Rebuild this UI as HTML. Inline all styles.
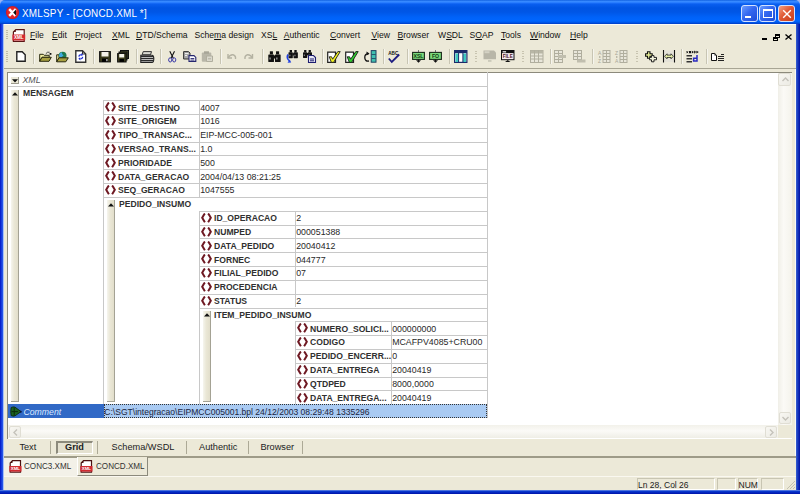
<!DOCTYPE html><html><head><meta charset="utf-8"><style>
*{margin:0;padding:0;box-sizing:border-box}
html,body{width:800px;height:494px;overflow:hidden}
body{position:relative;background:#ECE9D8;font-family:'Liberation Sans', sans-serif;color:#000}
.a{position:absolute}
.t{position:absolute;white-space:nowrap;line-height:1}
.sep{position:absolute;top:48.5px;width:2px;height:15.5px;border-left:1px solid #C8C5B3;border-right:1px solid #F6F5EE}
.hl{position:absolute;height:1px;background:#C8C8C8}
.vl{position:absolute;width:1px;background:#C8C8C8}
.nm{position:absolute;white-space:nowrap;font-weight:bold;font-size:9.2px;color:#303030;line-height:1;transform:scaleX(0.935);transform-origin:0 0}
.vv{position:absolute;white-space:nowrap;font-size:8.8px;color:#282828;line-height:1}
.ic{position:absolute;width:10px;height:9px}
.bar{position:absolute;background:linear-gradient(90deg,#F6F5EE,#EAE7D6 45%,#E2DECB);border-right:1px solid #A4A294;border-bottom:1px solid #A4A294}
</style></head><body>

<div class="a" style="left:0;top:0;width:6px;height:6px;background:#9AB4F2"></div><div class="a" style="left:794px;top:0;width:6px;height:6px;background:#9AB4F2"></div>
<div class="a" style="left:0;top:0;width:800px;height:25px;border-radius:5px 5px 0 0;background:linear-gradient(#0050D8 0px,#3D8FFF 1px,#2A7EFF 2.5px,#0A5FF0 4px,#0054E3 8px,#0056E6 12px,#0062F8 17px,#0066FF 21px,#0050E0 23px,#0038C0 24px)"></div>
<svg class="a" style="left:4.5px;top:5px" width="15" height="15" viewBox="0 0 15 15"><circle cx="7.5" cy="7.5" r="6.6" fill="#D01C24"/><circle cx="7.5" cy="7.5" r="5.6" fill="#E0282C"/><path d="M4.2 4.2 L10.5 10.8 M10.8 4.2 L4.2 10.8" stroke="#fff" stroke-width="2.4"/><path d="M8.2 7.5 L11 4.6 L11 10.4 Z" fill="#111"/></svg>
<div class="t" style="left:22px;top:8.4px;font-size:11px;color:#fff;letter-spacing:0.25px;transform:scaleX(0.9);transform-origin:0 0">XMLSPY - [CONCD.XML *]</div>
<div class="a" style="left:741px;top:5px;width:17px;height:17px;border:1px solid #D4E2FF;border-radius:3px;background:linear-gradient(135deg,#6A9CFF,#3468F0 45%,#1E4CD8)"><div class="a" style="left:3.2px;top:9.6px;width:5.5px;height:2.4px;background:#fff"></div></div>
<div class="a" style="left:759.3px;top:5px;width:17px;height:17px;border:1px solid #D4E2FF;border-radius:3px;background:linear-gradient(135deg,#6A9CFF,#3468F0 45%,#1E4CD8)"><div class="a" style="left:2.6px;top:3.4px;width:9.8px;height:8.6px;border:1.2px solid #fff;border-top-width:2.4px"></div></div>
<div class="a" style="left:778.2px;top:5px;width:17px;height:17px;border:1px solid #D4E2FF;border-radius:3px;background:linear-gradient(135deg,#F4A080,#E05A36 45%,#C83E1C)"><svg class="a" style="left:2.8px;top:2.8px" width="10" height="10" viewBox="0 0 10 10"><path d="M1.2 1.2L8.8 8.8M8.8 1.2L1.2 8.8" stroke="#fff" stroke-width="1.4"/></svg></div>
<div class="a" style="left:3px;top:24px;width:793px;height:1px;background:#FBFAF5"></div>
<div class="a" style="left:0;top:24px;width:3px;height:470px;background:linear-gradient(90deg,#0014C4,#1A44E0 60%,#2C5CEC)"></div>
<div class="a" style="left:3px;top:24px;width:1px;height:466px;background:#A8C0F4"></div>
<div class="a" style="left:796px;top:24px;width:4px;height:470px;background:linear-gradient(90deg,#3A62D0,#1A3CC0 40%,#0010A4)"></div>
<div class="a" style="left:0;top:490px;width:800px;height:4px;background:linear-gradient(#7C9CE8,#0A3CD0 30%,#0428C0 60%,#0014A8)"></div>
<div class="a" style="left:6px;top:30px;width:2px;height:10px;background:repeating-linear-gradient(#C0BCA8 0 1px,transparent 1px 2px)"></div>
<svg class="a" style="left:11.5px;top:28.5px" width="14" height="13" viewBox="0 0 14 13"><path d="M3.8 0.6H12.2V12.3H1.4V3Z" fill="#fff" stroke="#5A1414" stroke-width="1.2"/><path d="M1.4 3H3.8V0.6Z" fill="#5A1414"/><path d="M0.4 5.4H13.2V10.6Q13.2 11.6 12.2 11.6H0.4Z" fill="#D42A30"/><text x="6.8" y="9.8" font-size="4.6" font-family="Liberation Sans" font-weight="bold" fill="#fff" text-anchor="middle">XML</text></svg>
<div class="t" style="left:30px;top:30.5px;font-size:8.6px;color:#111"><u style="text-underline-offset:0.8px">F</u>ile</div>
<div class="t" style="left:52px;top:30.5px;font-size:8.6px;color:#111"><u style="text-underline-offset:0.8px">E</u>dit</div>
<div class="t" style="left:75px;top:30.5px;font-size:8.6px;color:#111"><u style="text-underline-offset:0.8px">P</u>roject</div>
<div class="t" style="left:112px;top:30.5px;font-size:8.6px;color:#111"><u style="text-underline-offset:0.8px">X</u>ML</div>
<div class="t" style="left:136px;top:30.5px;font-size:8.6px;color:#111"><u style="text-underline-offset:0.8px">D</u>TD/Schema</div>
<div class="t" style="left:194.5px;top:30.5px;font-size:8.6px;color:#111">Sche<u style="text-underline-offset:0.8px">m</u>a design</div>
<div class="t" style="left:261px;top:30.5px;font-size:8.6px;color:#111">XS<u style="text-underline-offset:0.8px">L</u></div>
<div class="t" style="left:283.75px;top:30.5px;font-size:8.6px;color:#111"><u style="text-underline-offset:0.8px">A</u>uthentic</div>
<div class="t" style="left:330px;top:30.5px;font-size:8.6px;color:#111"><u style="text-underline-offset:0.8px">C</u>onvert</div>
<div class="t" style="left:371.4px;top:30.5px;font-size:8.6px;color:#111"><u style="text-underline-offset:0.8px">V</u>iew</div>
<div class="t" style="left:397.5px;top:30.5px;font-size:8.6px;color:#111"><u style="text-underline-offset:0.8px">B</u>rowser</div>
<div class="t" style="left:438px;top:30.5px;font-size:8.6px;color:#111">W<u style="text-underline-offset:0.8px">S</u>DL</div>
<div class="t" style="left:469.6px;top:30.5px;font-size:8.6px;color:#111">S<u style="text-underline-offset:0.8px">O</u>AP</div>
<div class="t" style="left:501px;top:30.5px;font-size:8.6px;color:#111"><u style="text-underline-offset:0.8px">T</u>ools</div>
<div class="t" style="left:530px;top:30.5px;font-size:8.6px;color:#111"><u style="text-underline-offset:0.8px">W</u>indow</div>
<div class="t" style="left:570px;top:30.5px;font-size:8.6px;color:#111"><u style="text-underline-offset:0.8px">H</u>elp</div>
<div class="a" style="left:762px;top:38px;width:5px;height:2px;background:#000"></div>
<div class="a" style="left:775px;top:34px;width:5px;height:4px;border:1px solid #000;border-top-width:2px"></div><div class="a" style="left:773px;top:36.5px;width:5px;height:4.5px;border:1px solid #000;border-top-width:2px;background:#ECE9D8"></div>
<svg class="a" style="left:785px;top:34px" width="7" height="6" viewBox="0 0 7 6"><path d="M0.5 0.5L6.5 5.5M6.5 0.5L0.5 5.5" stroke="#000" stroke-width="1.3"/></svg>
<div class="a" style="left:6px;top:51px;width:2px;height:12px;background:repeating-linear-gradient(#C0BCA8 0 1px,transparent 1px 2px)"></div>
<div class="sep" style="left:33.2px"></div>
<div class="sep" style="left:93.2px"></div>
<div class="sep" style="left:135.7px"></div>
<div class="sep" style="left:160.0px"></div>
<div class="sep" style="left:219.7px"></div>
<div class="sep" style="left:261.7px"></div>
<div class="sep" style="left:322.2px"></div>
<div class="sep" style="left:382.7px"></div>
<div class="sep" style="left:406.8px"></div>
<div class="sep" style="left:449.2px"></div>
<div class="sep" style="left:549.7px"></div>
<div class="sep" style="left:591.7px"></div>
<div class="sep" style="left:681.0px"></div>
<div class="sep" style="left:705.7px"></div>
<div class="a" style="left:475.2px;top:51px;width:2px;height:12px;background:repeating-linear-gradient(#C8C4B0 0 1px,transparent 1px 2.4px)"></div>
<div class="a" style="left:522px;top:51px;width:2px;height:12px;background:repeating-linear-gradient(#C8C4B0 0 1px,transparent 1px 2.4px)"></div>
<div class="a" style="left:636.2px;top:51px;width:2px;height:12px;background:repeating-linear-gradient(#C8C4B0 0 1px,transparent 1px 2.4px)"></div>
<svg class="a" style="left:15.8px;top:51px;overflow:visible" width="10" height="11" viewBox="0 0 10 11"><path d="M0.8 0.8H6.2L9.2 3.8V10.2H0.8Z" fill="#fff" stroke="#222" stroke-width="1.4"/></svg>
<svg class="a" style="left:38.8px;top:51px;overflow:visible" width="13" height="11" viewBox="0 0 13 11"><path d="M0.7 3.3H4.2L5.2 4.3H10.2V6.3H3L0.7 10.3Z" fill="#F2EEA0" stroke="#2A2A10" stroke-width="1"/><path d="M0.7 10.3L3 6.3H12.3L10 10.3Z" fill="#A8A040" stroke="#2A2A10" stroke-width="1"/><path d="M6.8 2.8Q8 0.6 10.6 1.2" fill="none" stroke="#333" stroke-width="0.9"/><rect x="10.6" y="2" width="1.8" height="1.8" fill="#111"/></svg>
<svg class="a" style="left:56px;top:50.5px;overflow:visible" width="12.5" height="11.5" viewBox="0 0 12.5 11.5"><path d="M0.7 3.8H3V6.8L0.7 10.8Z" fill="#F2EEA0" stroke="#2A2A10" stroke-width="1"/><circle cx="6.6" cy="4.6" r="3.9" fill="#1E7A50"/><path d="M3 4.2Q3.5 1.5 6 1.2Q5.5 3 7.5 4.5Q6 6.5 3.5 6.5Z" fill="#40A8E0"/><path d="M0.7 10.8L3 6.8H12.3L9.8 10.8Z" fill="#A8A040" stroke="#2A2A10" stroke-width="1"/></svg>
<svg class="a" style="left:74.8px;top:50px;overflow:visible" width="11.5" height="13" viewBox="0 0 11.5 13"><path d="M0.8 0.8H7.5L10.7 4V12.2H0.8Z" fill="#fff" stroke="#333" stroke-width="1.4"/><path d="M7.5 0.8V4H10.7" fill="none" stroke="#333"/><path d="M3.2 6.5Q3.5 3.8 6.5 4.3L6 3L8.2 4.8L6.3 6.3L6.4 5.2Q4.8 5 4.4 6.8Z" fill="#2030D0"/><path d="M8.3 7Q8 9.8 5 9.3L5.5 10.6L3.3 8.8L5.2 7.3L5.1 8.4Q6.7 8.6 7.1 6.8Z" fill="#2030D0"/></svg>
<svg class="a" style="left:99px;top:51px;overflow:visible" width="12" height="11.5" viewBox="0 0 12 11.5"><rect x="0.6" y="0.6" width="10.8" height="10.3" fill="#3A3A1A" stroke="#111" stroke-width="1"/><rect x="2.5" y="1" width="7" height="4.5" fill="#F4F2E8"/><rect x="3" y="7.5" width="6" height="3.4" fill="#000"/><rect x="7.3" y="8" width="1.2" height="2.2" fill="#ddd"/></svg>
<svg class="a" style="left:117.2px;top:50px;overflow:visible" width="12" height="12.5" viewBox="0 0 12 12.5"><rect x="3.5" y="0.5" width="8" height="8" fill="#4A4A2A" stroke="#111"/><rect x="2" y="2" width="8" height="8" fill="#3A3A1A" stroke="#111"/><rect x="0.6" y="3.6" width="8.5" height="8.4" fill="#3A3A1A" stroke="#111"/><rect x="2.2" y="4" width="5" height="3.5" fill="#F4F2E8"/><rect x="2.5" y="9" width="4.5" height="2.8" fill="#000"/></svg>
<svg class="a" style="left:140px;top:50.5px;overflow:visible" width="14.5" height="12" viewBox="0 0 14.5 12"><path d="M3.2 0.6H11.5L10.5 3.8H2.2Z" fill="#D8D8D0" stroke="#333" stroke-width="1"/><path d="M0.8 4.2H12Q13.8 4.2 13.8 7.5Q13.8 11.4 12 11.4H0.8Z" fill="#EEE" stroke="#222" stroke-width="1.1"/><path d="M0.8 5.6H13.5M0.8 7.6H13.8M0.8 9.6H13.6" stroke="#2A2A2A" stroke-width="1.1"/></svg>
<svg class="a" style="left:168px;top:51px;overflow:visible" width="8.5" height="11.5" viewBox="0 0 8.5 11.5"><path d="M1.8 0.3L5.3 7.2M6.5 0.3L3 7.2" stroke="#111" stroke-width="1.1"/><ellipse cx="2.2" cy="8.9" rx="1.6" ry="2.1" fill="none" stroke="#3A3AA8" stroke-width="1"/><ellipse cx="6.2" cy="8.9" rx="1.6" ry="2.1" fill="none" stroke="#3A3AA8" stroke-width="1"/></svg>
<svg class="a" style="left:183px;top:51px;overflow:visible" width="13.5" height="11" viewBox="0 0 13.5 11"><path d="M0.6 0.6H5.5L7 2V8H0.6Z" fill="#A8A8A8" stroke="#333" stroke-width="1"/><path d="M2 2.5H5.5M2 4.5H4" stroke="#EEE"/><path d="M6 4.6H11L12.8 6.4V10.4H6Z" fill="#fff" stroke="#26266E" stroke-width="1.1"/><path d="M7.5 7.5H11.3M7.5 9H11.3" stroke="#26266E" stroke-width="0.9"/></svg>
<svg class="a" style="left:201.25px;top:50.75px;overflow:visible" width="12.5" height="11" viewBox="0 0 12.5 11"><rect x="0.8" y="1.5" width="9.5" height="9.3" rx="1" fill="#B8B6A8"/><rect x="3" y="0.3" width="5" height="2.5" fill="#A8A698"/><path d="M5.5 5H11.5V10.5H5.5Z" fill="#DAD8CC" stroke="#B0AE9E"/><path d="M7 7.8H10" stroke="#B0AE9E"/></svg>
<svg class="a" style="left:226px;top:53px;overflow:visible" width="10.5" height="7" viewBox="0 0 10.5 7"><path d="M2 1V5H6" fill="none" stroke="#B4B2A2" stroke-width="1.4"/><path d="M2 5Q4 1.5 7 1.8Q10 2.5 9.5 6" fill="none" stroke="#B4B2A2" stroke-width="1.4"/></svg>
<svg class="a" style="left:244.4px;top:53px;overflow:visible" width="10.5" height="7" viewBox="0 0 10.5 7"><path d="M8.5 1V5H4.5" fill="none" stroke="#B4B2A2" stroke-width="1.4"/><path d="M8.5 5Q6.5 1.5 3.5 1.8Q0.5 2.5 1 6" fill="none" stroke="#B4B2A2" stroke-width="1.4"/></svg>
<svg class="a" style="left:267.6px;top:50.75px;overflow:visible" width="13" height="11" viewBox="0 0 13 11"><g transform="translate(0.3,0.3) scale(1.03)"><rect x="1.5" y="0" width="3" height="3" fill="#111"/><rect x="7.5" y="0" width="3" height="3" fill="#111"/><rect x="0" y="3" width="5.5" height="7.5" rx="0.6" fill="#111"/><rect x="6.5" y="3" width="5.5" height="7.5" rx="0.6" fill="#111"/><rect x="5" y="4" width="2" height="3" fill="#111"/><rect x="1" y="6" width="1.5" height="2" fill="#888"/><rect x="7.5" y="6" width="1.5" height="2" fill="#888"/></g></svg>
<svg class="a" style="left:285.75px;top:50.4px;overflow:visible" width="12" height="13" viewBox="0 0 12 13"><g transform="translate(2.5,0) scale(0.78)"><rect x="1.5" y="0" width="3" height="3" fill="#111"/><rect x="7.5" y="0" width="3" height="3" fill="#111"/><rect x="0" y="3" width="5.5" height="7.5" rx="0.6" fill="#111"/><rect x="6.5" y="3" width="5.5" height="7.5" rx="0.6" fill="#111"/><rect x="5" y="4" width="2" height="3" fill="#111"/><rect x="1" y="6" width="1.5" height="2" fill="#888"/><rect x="7.5" y="6" width="1.5" height="2" fill="#888"/></g><path d="M2 4.5Q0 8 3.5 11" fill="none" stroke="#2040E0" stroke-width="1.6"/><path d="M1.5 12.8L5.2 12.6L3.8 9.5Z" fill="#2040E0"/></svg>
<svg class="a" style="left:303px;top:50.4px;overflow:visible" width="13" height="13" viewBox="0 0 13 13"><g transform="translate(0,0) scale(0.75)"><rect x="1.5" y="0" width="3" height="3" fill="#111"/><rect x="7.5" y="0" width="3" height="3" fill="#111"/><rect x="0" y="3" width="5.5" height="7.5" rx="0.6" fill="#111"/><rect x="6.5" y="3" width="5.5" height="7.5" rx="0.6" fill="#111"/><rect x="5" y="4" width="2" height="3" fill="#111"/><rect x="1" y="6" width="1.5" height="2" fill="#888"/><rect x="7.5" y="6" width="1.5" height="2" fill="#888"/></g><path d="M5.5 5.5H10.5L12.5 7.5V12.5H5.5Z" fill="#E8E8F4" stroke="#1E1E70" stroke-width="1.1"/><path d="M7 9H11M7 10.8H11" stroke="#1E1E70"/></svg>
<svg class="a" style="left:326.75px;top:51px;overflow:visible" width="13.5" height="12" viewBox="0 0 13.5 12"><path d="M0.7 1.2H8.5V11.3H0.7Z" fill="#fff" stroke="#222" stroke-width="1.2"/><path d="M2.2 5.8H4.6L5.6 8.2L10.8 0.6H13.2L6.6 11.4H4.4Z" fill="#F0F020" stroke="#1A1A1A" stroke-width="0.9" stroke-linejoin="round"/></svg>
<svg class="a" style="left:345px;top:51px;overflow:visible" width="13.5" height="12" viewBox="0 0 13.5 12"><path d="M0.7 1.2H8.5V11.3H0.7Z" fill="#fff" stroke="#222" stroke-width="1.2"/><path d="M2.2 5.8H4.6L5.6 8.2L10.8 0.6H13.2L6.6 11.4H4.4Z" fill="#30D030" stroke="#1A1A1A" stroke-width="0.9" stroke-linejoin="round"/></svg>
<svg class="a" style="left:363.6px;top:50.4px;overflow:visible" width="12.5" height="12.5" viewBox="0 0 12.5 12.5"><path d="M4.5 4Q0.5 3.5 0.8 8Q1.2 11.8 5 11" fill="none" stroke="#111" stroke-width="1.3"/><path d="M2.5 1.5L5.5 3.5L2.5 5.5Z" fill="#111"/><rect x="7.2" y="0.6" width="4.8" height="11.6" fill="#40C0B0" stroke="#1E4060" stroke-width="1"/><path d="M7.5 4.5H11.8M7.5 8.5H11.8" stroke="#1E4060" stroke-width="0.8"/></svg>
<svg class="a" style="left:388px;top:50.5px;overflow:visible" width="12" height="12" viewBox="0 0 12 12"><text x="0.3" y="4.2" font-size="4.6" font-family="Liberation Sans" font-weight="bold" fill="#111">ABC</text><path d="M0.8 7.5L3.8 11L11.2 3.5" fill="none" stroke="#1C1C80" stroke-width="1.8"/></svg>
<svg class="a" style="left:411.75px;top:50px;overflow:visible" width="13" height="13" viewBox="0 0 13 13"><path d="M6.5 0V2.5" stroke="#777"/><rect x="0.6" y="2.4" width="11.8" height="7" fill="#7CDA7C" stroke="#1A2A1A" stroke-width="1.1"/><text x="6.5" y="8.2" font-size="5.2" font-family="Liberation Sans" font-weight="bold" fill="#0E3A0E" text-anchor="middle">XSL</text><path d="M6.5 9.5V11" stroke="#111"/><path d="M4 10.3H9L6.5 12.8Z" fill="#111"/></svg>
<svg class="a" style="left:429.25px;top:50px;overflow:visible" width="13" height="13" viewBox="0 0 13 13"><path d="M6.5 0V2.5" stroke="#777"/><rect x="0.6" y="2.4" width="11.8" height="7" fill="#7CDA7C" stroke="#1A2A1A" stroke-width="1.1"/><text x="6.5" y="8.2" font-size="5.2" font-family="Liberation Sans" font-weight="bold" fill="#0E3A0E" text-anchor="middle">FO</text><path d="M6.5 9.5V11" stroke="#111"/><path d="M4 10.3H9L6.5 12.8Z" fill="#111"/></svg>
<svg class="a" style="left:453.6px;top:49.75px;overflow:visible" width="13.5" height="13" viewBox="0 0 13.5 13"><rect x="0.6" y="0.6" width="12.3" height="11.8" fill="#fff" stroke="#1A2A6A" stroke-width="1.2"/><rect x="0.6" y="0.6" width="12.3" height="2.6" fill="#1A2A6A"/><rect x="1.5" y="3.5" width="3" height="8.5" fill="#40C8C0"/><rect x="9" y="3.5" width="3" height="8.5" fill="#40C8C0"/><path d="M4.6 3V12.4M8.9 3V12.4" stroke="#1A2A6A" stroke-width="1"/></svg>
<svg class="a" style="left:483px;top:50.4px;overflow:visible" width="13.5" height="12" viewBox="0 0 13.5 12"><path d="M0.5 0.5H11L13 2.5V9.3H0.5Z" fill="#B8B6A8"/><rect x="1.5" y="1.2" width="5" height="2" fill="#D4D2C4"/><rect x="5" y="10.2" width="3.5" height="1.5" fill="#C4C2B4"/></svg>
<svg class="a" style="left:500.75px;top:50.4px;overflow:visible" width="13.5" height="12.5" viewBox="0 0 13.5 12.5"><rect x="0.5" y="0.5" width="12.5" height="9.2" fill="#F6ECEE" stroke="#111" stroke-width="1"/><rect x="0.5" y="0.5" width="12.5" height="2.6" fill="#111"/><rect x="1.6" y="1.1" width="3.5" height="1.4" fill="#ddd"/><text x="6.75" y="8.4" font-size="4.6" font-family="Liberation Sans" font-weight="bold" fill="#4A1424" text-anchor="middle">FILE</text><path d="M4 12H9.5L6.75 10Z" fill="#111"/></svg>
<svg class="a" style="left:529.9px;top:50.1px;overflow:visible" width="13.5" height="13" viewBox="0 0 13.5 13"><rect x="0.5" y="0.5" width="12.5" height="12" fill="#E8E6DA" stroke="#B0AE9E"/><rect x="0.5" y="0.5" width="12.5" height="3" fill="#B8B6A6"/><path d="M0.5 6H13M0.5 9H13M4.5 0.5V12.5M8.5 0.5V12.5" stroke="#B0AE9E" stroke-width="1"/></svg>
<svg class="a" style="left:554.2px;top:50.1px;overflow:visible" width="12.5" height="13" viewBox="0 0 12.5 13"><rect x="0.5" y="0.5" width="8" height="12" fill="#E8E6DA" stroke="#B0AE9E"/><path d="M0.5 3.5H8.5M0.5 6.5H8.5M0.5 9.5H8.5M4.5 0.5V12.5" stroke="#B0AE9E"/><rect x="4" y="5" width="8" height="3" fill="#C0BEAE"/></svg>
<svg class="a" style="left:572.8px;top:50.1px;overflow:visible" width="13" height="13" viewBox="0 0 13 13"><rect x="0.5" y="0.5" width="8" height="9" fill="#E8E6DA" stroke="#B0AE9E"/><path d="M0.5 3.5H8.5M0.5 6.5H8.5M4.5 0.5V9.5" stroke="#B0AE9E"/><rect x="4" y="9.5" width="8.5" height="3" fill="#C0BEAE"/></svg>
<svg class="a" style="left:597.5px;top:50.1px;overflow:visible" width="12.5" height="13" viewBox="0 0 12.5 13"><text x="0" y="4.8" font-size="5" font-family="Liberation Sans" fill="#A8A696">A</text><text x="0" y="12.5" font-size="5" font-family="Liberation Sans" fill="#A8A696">Z</text><path d="M1.8 6V8" stroke="#A8A696"/><rect x="5" y="0.5" width="7" height="12" fill="#E8E6DA" stroke="#B0AE9E"/><path d="M5 3.5H12M5 6.5H12M5 9.5H12M8.5 0.5V12.5" stroke="#B0AE9E"/></svg>
<svg class="a" style="left:615.4px;top:50.1px;overflow:visible" width="12.5" height="13" viewBox="0 0 12.5 13"><text x="0" y="4.8" font-size="5" font-family="Liberation Sans" fill="#A8A696">Z</text><text x="0" y="12.5" font-size="5" font-family="Liberation Sans" fill="#A8A696">A</text><path d="M1.8 6V8" stroke="#A8A696"/><rect x="5" y="0.5" width="7" height="12" fill="#E8E6DA" stroke="#B0AE9E"/><path d="M5 3.5H12M5 6.5H12M5 9.5H12M8.5 0.5V12.5" stroke="#B0AE9E"/></svg>
<svg class="a" style="left:644.75px;top:51px;overflow:visible" width="12.5" height="11.5" viewBox="0 0 12.5 11.5"><path d="M2.5 0.7H5V2.8H7.2V5.2H5V7.3H2.5V5.2H0.6V2.8H2.5Z" fill="#E6EE98" stroke="#111" stroke-width="1.1"/><path d="M6.5 4.6H9V6.4H11.5V8.8H9V10.8H6.5V8.8H4.5V6.4H6.5Z" fill="#F2F2DC" stroke="#222" stroke-width="1"/></svg>
<svg class="a" style="left:663px;top:50px;overflow:visible" width="12" height="12.5" viewBox="0 0 12 12.5"><rect x="1" y="0.5" width="10" height="11.5" fill="#E4E2D8"/><path d="M0.5 0V12.5M11.5 0V12.5" stroke="#111" stroke-width="1.1"/><path d="M1.6 6.3L4 3.8V5.1H8V3.8L10.4 6.3L8 8.8V7.5H4V8.8Z" fill="#E4EEA8" stroke="#222" stroke-width="0.8"/></svg>
<svg class="a" style="left:686px;top:50.2px;overflow:visible" width="13.5" height="13" viewBox="0 0 13.5 13"><path d="M0.5 1.2L2 3.2M2 1.2L0.5 3.2" stroke="#111" stroke-width="0.8"/><path d="M3 1H5V3.2H3Z" fill="#111"/><path d="M5.8 0.8L8 2.1L5.8 3.4Z" fill="#111"/><path d="M8.6 0.8V3.4M8.6 2H10" stroke="#111" stroke-width="0.9"/><path d="M10.4 0.8L12.8 2.1L10.4 3.4Z" fill="#111"/><path d="M0.5 5.8H6M0.5 8.8H6M0.5 11.8H6" stroke="#333" stroke-width="1.6"/><path d="M11 5V11H7.6V8.2H11" fill="none" stroke="#2A2AC0" stroke-width="1.5"/></svg>
<svg class="a" style="left:711px;top:53px;overflow:visible" width="14" height="8" viewBox="0 0 14 8"><path d="M0.5 0.5H3.8L5.5 2.2V7.5H0.5Z" fill="#fff" stroke="#111" stroke-width="1"/><path d="M3.5 0.5V2.5H5.5Z" fill="#111"/><path d="M10 1.5H13M7 3.5H13M7 5.5H13M7 7.5H13" stroke="#222" stroke-width="1"/></svg>
<div class="a" style="left:4px;top:68px;width:792px;height:1px;background:#A8A594"></div>
<div class="a" style="left:7px;top:72px;width:785px;height:366.5px;border:1px solid #8C8A7C;border-right:none;border-bottom:none;background:#fff"></div>
<div class="a" style="left:795px;top:69px;width:1px;height:388px;background:#FAF9F4"></div>
<div class="a" style="left:778px;top:73px;width:13.5px;height:352px;background:linear-gradient(90deg,#F0EFE8,#FBFAF6 40%,#F4F3EC)"></div>
<div class="a" style="left:778.3px;top:73.2px;width:13px;height:13px;border:1px solid #E0DED4;border-radius:2px;background:linear-gradient(135deg,#F8F7F2,#ECEBE4)"><svg class="a" style="left:2.5px;top:3px" width="7" height="5" viewBox="0 0 7 5"><path d="M0.5 4L3.5 1L6.5 4" fill="none" stroke="#C4C2BA" stroke-width="1.4"/></svg></div>
<div class="a" style="left:779px;top:411.5px;width:12px;height:12.5px;border:1px solid #E0DED4;border-radius:2px;background:linear-gradient(135deg,#F8F7F2,#ECEBE4)"><svg class="a" style="left:2px;top:3.5px" width="7" height="5" viewBox="0 0 7 5"><path d="M0.5 1L3.5 4L6.5 1" fill="none" stroke="#C4C2BA" stroke-width="1.4"/></svg></div>
<div class="a" style="left:8px;top:425px;width:770px;height:13px;background:linear-gradient(#F2F1EA,#FBFAF7 45%,#EFEEE6)"></div>
<div class="a" style="left:8.5px;top:426px;width:12px;height:12px;border:1px solid #E0DED4;border-radius:2px;background:linear-gradient(135deg,#F8F7F2,#ECEBE4)"><svg class="a" style="left:3px;top:2px" width="5" height="7" viewBox="0 0 5 7"><path d="M4 0.5L1 3.5L4 6.5" fill="none" stroke="#C4C2BA" stroke-width="1.4"/></svg></div>
<div class="a" style="left:765px;top:426px;width:12px;height:12px;border:1px solid #E0DED4;border-radius:2px;background:linear-gradient(135deg,#F8F7F2,#ECEBE4)"><svg class="a" style="left:3px;top:2px" width="5" height="7" viewBox="0 0 5 7"><path d="M1 0.5L4 3.5L1 6.5" fill="none" stroke="#C4C2BA" stroke-width="1.4"/></svg></div>
<div class="a" style="left:777.5px;top:425px;width:14px;height:13px;background:#ECE9D8"></div>
<div class="hl" style="left:8px;top:86.2px;width:478.5px"></div>
<div class="vl" style="left:486.5px;top:72px;height:346px"></div>
<div class="a" style="left:10.8px;top:77px;width:8.5px;height:7px;background:#ECE9D8;border-right:1px solid #9C9A8C;border-bottom:1px solid #9C9A8C"></div>
<svg class="a" style="left:11.8px;top:79px" width="6" height="4" viewBox="0 0 6 4"><path d="M0 0.3H6L3 3.5Z" fill="#111"/></svg>
<div class="t" style="left:22.5px;top:75.8px;font-size:8.8px;font-style:italic;color:#555">XML</div>
<div class="bar" style="left:11px;top:89.5px;width:8px;height:312.5px"></div>
<svg class="a" style="left:12.2px;top:92.0px" width="6" height="4" viewBox="0 0 6 4"><path d="M0 3.6H6L3 0.3Z" fill="#111"/></svg>
<div class="nm" style="left:23px;top:88.6px">MENSAGEM</div>
<div class="vl" style="left:103px;top:100.20px;height:304.04px"></div>
<div class="hl" style="left:103px;top:100.20px;width:383.5px"></div>
<svg class="a" style="left:105.0px;top:102.3px" width="11" height="10" viewBox="0 0 11 10"><path d="M3.9 0.5Q3.2 1.2 1.2 4.7Q3.2 8.2 3.9 9.2" fill="none" stroke="#6E1822" stroke-width="2"/><path d="M7.1 0.5Q7.8 1.2 9.8 4.7Q7.8 8.2 7.1 9.2" fill="none" stroke="#6E1822" stroke-width="2"/></svg>
<div class="nm" style="left:118.4px;top:103.55px">SITE_DESTINO</div>
<div class="vv" style="left:200.2px;top:103.55px">4007</div>
<div class="hl" style="left:103px;top:114.02px;width:383.5px"></div>
<svg class="a" style="left:105.0px;top:116.12px" width="11" height="10" viewBox="0 0 11 10"><path d="M3.9 0.5Q3.2 1.2 1.2 4.7Q3.2 8.2 3.9 9.2" fill="none" stroke="#6E1822" stroke-width="2"/><path d="M7.1 0.5Q7.8 1.2 9.8 4.7Q7.8 8.2 7.1 9.2" fill="none" stroke="#6E1822" stroke-width="2"/></svg>
<div class="nm" style="left:118.4px;top:117.37px">SITE_ORIGEM</div>
<div class="vv" style="left:200.2px;top:117.37px">1016</div>
<div class="hl" style="left:103px;top:127.84px;width:383.5px"></div>
<svg class="a" style="left:105.0px;top:129.94px" width="11" height="10" viewBox="0 0 11 10"><path d="M3.9 0.5Q3.2 1.2 1.2 4.7Q3.2 8.2 3.9 9.2" fill="none" stroke="#6E1822" stroke-width="2"/><path d="M7.1 0.5Q7.8 1.2 9.8 4.7Q7.8 8.2 7.1 9.2" fill="none" stroke="#6E1822" stroke-width="2"/></svg>
<div class="nm" style="left:118.4px;top:131.19px">TIPO_TRANSAC...</div>
<div class="vv" style="left:200.2px;top:131.19px">EIP-MCC-005-001</div>
<div class="hl" style="left:103px;top:141.66px;width:383.5px"></div>
<svg class="a" style="left:105.0px;top:143.76px" width="11" height="10" viewBox="0 0 11 10"><path d="M3.9 0.5Q3.2 1.2 1.2 4.7Q3.2 8.2 3.9 9.2" fill="none" stroke="#6E1822" stroke-width="2"/><path d="M7.1 0.5Q7.8 1.2 9.8 4.7Q7.8 8.2 7.1 9.2" fill="none" stroke="#6E1822" stroke-width="2"/></svg>
<div class="nm" style="left:118.4px;top:145.01px">VERSAO_TRANS...</div>
<div class="vv" style="left:200.2px;top:145.01px">1.0</div>
<div class="hl" style="left:103px;top:155.48px;width:383.5px"></div>
<svg class="a" style="left:105.0px;top:157.58px" width="11" height="10" viewBox="0 0 11 10"><path d="M3.9 0.5Q3.2 1.2 1.2 4.7Q3.2 8.2 3.9 9.2" fill="none" stroke="#6E1822" stroke-width="2"/><path d="M7.1 0.5Q7.8 1.2 9.8 4.7Q7.8 8.2 7.1 9.2" fill="none" stroke="#6E1822" stroke-width="2"/></svg>
<div class="nm" style="left:118.4px;top:158.83px">PRIORIDADE</div>
<div class="vv" style="left:200.2px;top:158.83px">500</div>
<div class="hl" style="left:103px;top:169.30px;width:383.5px"></div>
<svg class="a" style="left:105.0px;top:171.4px" width="11" height="10" viewBox="0 0 11 10"><path d="M3.9 0.5Q3.2 1.2 1.2 4.7Q3.2 8.2 3.9 9.2" fill="none" stroke="#6E1822" stroke-width="2"/><path d="M7.1 0.5Q7.8 1.2 9.8 4.7Q7.8 8.2 7.1 9.2" fill="none" stroke="#6E1822" stroke-width="2"/></svg>
<div class="nm" style="left:118.4px;top:172.65px">DATA_GERACAO</div>
<div class="vv" style="left:200.2px;top:172.65px">2004/04/13 08:21:25</div>
<div class="hl" style="left:103px;top:183.12px;width:383.5px"></div>
<svg class="a" style="left:105.0px;top:185.22px" width="11" height="10" viewBox="0 0 11 10"><path d="M3.9 0.5Q3.2 1.2 1.2 4.7Q3.2 8.2 3.9 9.2" fill="none" stroke="#6E1822" stroke-width="2"/><path d="M7.1 0.5Q7.8 1.2 9.8 4.7Q7.8 8.2 7.1 9.2" fill="none" stroke="#6E1822" stroke-width="2"/></svg>
<div class="nm" style="left:118.4px;top:186.47px">SEQ_GERACAO</div>
<div class="vv" style="left:200.2px;top:186.47px">1047555</div>
<div class="vl" style="left:199px;top:100.20px;height:96.74px"></div>
<div class="hl" style="left:103px;top:196.94px;width:383.5px"></div>
<div class="bar" style="left:107px;top:200.14px;width:8px;height:201.86px"></div>
<svg class="a" style="left:108.2px;top:202.64px" width="6" height="4" viewBox="0 0 6 4"><path d="M0 3.6H6L3 0.3Z" fill="#111"/></svg>
<div class="nm" style="left:118.6px;top:200.29px">PEDIDO_INSUMO</div>
<div class="vl" style="left:199px;top:210.76px;height:193.48px"></div>
<div class="hl" style="left:199px;top:210.76px;width:287.5px"></div>
<svg class="a" style="left:201.0px;top:212.85999999999999px" width="11" height="10" viewBox="0 0 11 10"><path d="M3.9 0.5Q3.2 1.2 1.2 4.7Q3.2 8.2 3.9 9.2" fill="none" stroke="#6E1822" stroke-width="2"/><path d="M7.1 0.5Q7.8 1.2 9.8 4.7Q7.8 8.2 7.1 9.2" fill="none" stroke="#6E1822" stroke-width="2"/></svg>
<div class="nm" style="left:214.4px;top:214.11px">ID_OPERACAO</div>
<div class="vv" style="left:296.2px;top:214.11px">2</div>
<div class="hl" style="left:199px;top:224.58px;width:287.5px"></div>
<svg class="a" style="left:201.0px;top:226.67999999999998px" width="11" height="10" viewBox="0 0 11 10"><path d="M3.9 0.5Q3.2 1.2 1.2 4.7Q3.2 8.2 3.9 9.2" fill="none" stroke="#6E1822" stroke-width="2"/><path d="M7.1 0.5Q7.8 1.2 9.8 4.7Q7.8 8.2 7.1 9.2" fill="none" stroke="#6E1822" stroke-width="2"/></svg>
<div class="nm" style="left:214.4px;top:227.93px">NUMPED</div>
<div class="vv" style="left:296.2px;top:227.93px">000051388</div>
<div class="hl" style="left:199px;top:238.40px;width:287.5px"></div>
<svg class="a" style="left:201.0px;top:240.49999999999997px" width="11" height="10" viewBox="0 0 11 10"><path d="M3.9 0.5Q3.2 1.2 1.2 4.7Q3.2 8.2 3.9 9.2" fill="none" stroke="#6E1822" stroke-width="2"/><path d="M7.1 0.5Q7.8 1.2 9.8 4.7Q7.8 8.2 7.1 9.2" fill="none" stroke="#6E1822" stroke-width="2"/></svg>
<div class="nm" style="left:214.4px;top:241.75px">DATA_PEDIDO</div>
<div class="vv" style="left:296.2px;top:241.75px">20040412</div>
<div class="hl" style="left:199px;top:252.22px;width:287.5px"></div>
<svg class="a" style="left:201.0px;top:254.32000000000002px" width="11" height="10" viewBox="0 0 11 10"><path d="M3.9 0.5Q3.2 1.2 1.2 4.7Q3.2 8.2 3.9 9.2" fill="none" stroke="#6E1822" stroke-width="2"/><path d="M7.1 0.5Q7.8 1.2 9.8 4.7Q7.8 8.2 7.1 9.2" fill="none" stroke="#6E1822" stroke-width="2"/></svg>
<div class="nm" style="left:214.4px;top:255.57px">FORNEC</div>
<div class="vv" style="left:296.2px;top:255.57px">044777</div>
<div class="hl" style="left:199px;top:266.04px;width:287.5px"></div>
<svg class="a" style="left:201.0px;top:268.14000000000004px" width="11" height="10" viewBox="0 0 11 10"><path d="M3.9 0.5Q3.2 1.2 1.2 4.7Q3.2 8.2 3.9 9.2" fill="none" stroke="#6E1822" stroke-width="2"/><path d="M7.1 0.5Q7.8 1.2 9.8 4.7Q7.8 8.2 7.1 9.2" fill="none" stroke="#6E1822" stroke-width="2"/></svg>
<div class="nm" style="left:214.4px;top:269.39px">FILIAL_PEDIDO</div>
<div class="vv" style="left:296.2px;top:269.39px">07</div>
<div class="hl" style="left:199px;top:279.86px;width:287.5px"></div>
<svg class="a" style="left:201.0px;top:281.96000000000004px" width="11" height="10" viewBox="0 0 11 10"><path d="M3.9 0.5Q3.2 1.2 1.2 4.7Q3.2 8.2 3.9 9.2" fill="none" stroke="#6E1822" stroke-width="2"/><path d="M7.1 0.5Q7.8 1.2 9.8 4.7Q7.8 8.2 7.1 9.2" fill="none" stroke="#6E1822" stroke-width="2"/></svg>
<div class="nm" style="left:214.4px;top:283.21px">PROCEDENCIA</div>
<div class="vv" style="left:296.2px;top:283.21px"></div>
<div class="hl" style="left:199px;top:293.68px;width:287.5px"></div>
<svg class="a" style="left:201.0px;top:295.78000000000003px" width="11" height="10" viewBox="0 0 11 10"><path d="M3.9 0.5Q3.2 1.2 1.2 4.7Q3.2 8.2 3.9 9.2" fill="none" stroke="#6E1822" stroke-width="2"/><path d="M7.1 0.5Q7.8 1.2 9.8 4.7Q7.8 8.2 7.1 9.2" fill="none" stroke="#6E1822" stroke-width="2"/></svg>
<div class="nm" style="left:214.4px;top:297.03px">STATUS</div>
<div class="vv" style="left:296.2px;top:297.03px">2</div>
<div class="vl" style="left:295px;top:210.76px;height:96.74px"></div>
<div class="hl" style="left:199px;top:307.50px;width:287.5px"></div>
<div class="bar" style="left:203px;top:310.7px;width:8px;height:91.30000000000001px"></div>
<svg class="a" style="left:204.2px;top:313.2px" width="6" height="4" viewBox="0 0 6 4"><path d="M0 3.6H6L3 0.3Z" fill="#111"/></svg>
<div class="nm" style="left:214.2px;top:310.85px">ITEM_PEDIDO_INSUMO</div>
<div class="vl" style="left:295px;top:321.32px;height:82.92px"></div>
<div class="hl" style="left:295px;top:321.32px;width:191.5px"></div>
<svg class="a" style="left:297.0px;top:323.42px" width="11" height="10" viewBox="0 0 11 10"><path d="M3.9 0.5Q3.2 1.2 1.2 4.7Q3.2 8.2 3.9 9.2" fill="none" stroke="#6E1822" stroke-width="2"/><path d="M7.1 0.5Q7.8 1.2 9.8 4.7Q7.8 8.2 7.1 9.2" fill="none" stroke="#6E1822" stroke-width="2"/></svg>
<div class="nm" style="left:310.4px;top:324.67px">NUMERO_SOLICI...</div>
<div class="vv" style="left:392.2px;top:324.67px">000000000</div>
<div class="hl" style="left:295px;top:335.14px;width:191.5px"></div>
<svg class="a" style="left:297.0px;top:337.24px" width="11" height="10" viewBox="0 0 11 10"><path d="M3.9 0.5Q3.2 1.2 1.2 4.7Q3.2 8.2 3.9 9.2" fill="none" stroke="#6E1822" stroke-width="2"/><path d="M7.1 0.5Q7.8 1.2 9.8 4.7Q7.8 8.2 7.1 9.2" fill="none" stroke="#6E1822" stroke-width="2"/></svg>
<div class="nm" style="left:310.4px;top:338.49px">CODIGO</div>
<div class="vv" style="left:392.2px;top:338.49px">MCAFPV4085+CRU00</div>
<div class="hl" style="left:295px;top:348.96px;width:191.5px"></div>
<svg class="a" style="left:297.0px;top:351.06px" width="11" height="10" viewBox="0 0 11 10"><path d="M3.9 0.5Q3.2 1.2 1.2 4.7Q3.2 8.2 3.9 9.2" fill="none" stroke="#6E1822" stroke-width="2"/><path d="M7.1 0.5Q7.8 1.2 9.8 4.7Q7.8 8.2 7.1 9.2" fill="none" stroke="#6E1822" stroke-width="2"/></svg>
<div class="nm" style="left:310.4px;top:352.31px">PEDIDO_ENCERR...</div>
<div class="vv" style="left:392.2px;top:352.31px">0</div>
<div class="hl" style="left:295px;top:362.78px;width:191.5px"></div>
<svg class="a" style="left:297.0px;top:364.88px" width="11" height="10" viewBox="0 0 11 10"><path d="M3.9 0.5Q3.2 1.2 1.2 4.7Q3.2 8.2 3.9 9.2" fill="none" stroke="#6E1822" stroke-width="2"/><path d="M7.1 0.5Q7.8 1.2 9.8 4.7Q7.8 8.2 7.1 9.2" fill="none" stroke="#6E1822" stroke-width="2"/></svg>
<div class="nm" style="left:310.4px;top:366.13px">DATA_ENTREGA</div>
<div class="vv" style="left:392.2px;top:366.13px">20040419</div>
<div class="hl" style="left:295px;top:376.60px;width:191.5px"></div>
<svg class="a" style="left:297.0px;top:378.7px" width="11" height="10" viewBox="0 0 11 10"><path d="M3.9 0.5Q3.2 1.2 1.2 4.7Q3.2 8.2 3.9 9.2" fill="none" stroke="#6E1822" stroke-width="2"/><path d="M7.1 0.5Q7.8 1.2 9.8 4.7Q7.8 8.2 7.1 9.2" fill="none" stroke="#6E1822" stroke-width="2"/></svg>
<div class="nm" style="left:310.4px;top:379.95px">QTDPED</div>
<div class="vv" style="left:392.2px;top:379.95px">8000,0000</div>
<div class="hl" style="left:295px;top:390.42px;width:191.5px"></div>
<svg class="a" style="left:297.0px;top:392.52000000000004px" width="11" height="10" viewBox="0 0 11 10"><path d="M3.9 0.5Q3.2 1.2 1.2 4.7Q3.2 8.2 3.9 9.2" fill="none" stroke="#6E1822" stroke-width="2"/><path d="M7.1 0.5Q7.8 1.2 9.8 4.7Q7.8 8.2 7.1 9.2" fill="none" stroke="#6E1822" stroke-width="2"/></svg>
<div class="nm" style="left:310.4px;top:393.77px">DATA_ENTREGA...</div>
<div class="vv" style="left:392.2px;top:393.77px">20040419</div>
<div class="vl" style="left:391px;top:321.32px;height:82.92px"></div>
<div class="hl" style="left:295px;top:404.24px;width:191.5px"></div>
<div class="a" style="left:8px;top:404.24px;width:95.5px;height:13.82px;background:#3169C6"></div>
<div class="a" style="left:103.5px;top:404.24px;width:383px;height:13.82px;background:#A9CAF2;border:1px dotted #333"></div>
<svg class="a" style="left:9.5px;top:406.04px" width="12" height="11" viewBox="0 0 12 11"><path d="M1.2 1.5Q3.5 0.5 5 1.2L11 5.6L5 9.8Q3.5 10.6 1.2 9.6Q0.3 5.5 1.2 1.5Z" fill="#1A6222" stroke="#0A280A" stroke-width="0.9"/><path d="M4.2 1.5V9.6M1.5 5.6H8" stroke="#0A2A0A" stroke-width="1"/><circle cx="10.8" cy="5.8" r="1" fill="#0A1A40"/></svg>
<div class="t" style="left:23.5px;top:407.84px;font-size:8.7px;font-style:italic;color:#D8E8FF">Comment</div>
<div class="t" style="left:104.3px;top:407.59px;font-size:8.55px;color:#1A2440">C:\SGT\integracao\EIPMCC005001.bpl 24/12/2003 08:29:48 1335296</div>
<div class="a" style="left:50.1px;top:440.5px;width:1px;height:13.5px;background:#ACA996"></div>
<div class="a" style="left:97.0px;top:440.5px;width:1px;height:13.5px;background:#ACA996"></div>
<div class="a" style="left:186.0px;top:440.5px;width:1px;height:13.5px;background:#ACA996"></div>
<div class="a" style="left:247.9px;top:440.5px;width:1px;height:13.5px;background:#ACA996"></div>
<div class="a" style="left:302.2px;top:440.5px;width:1px;height:13.5px;background:#ACA996"></div>
<div class="a" style="left:55.5px;top:441px;width:37.5px;height:12.5px;border:1px solid;border-width:2px 1px 1px 2px;border-color:#8C8A7C #FFFFFF #FFFFFF #8C8A7C;background:#E4E1D0"></div>
<div class="t" style="left:19.4px;top:443px;font-size:9.2px;font-weight:normal;color:#222">Text</div>
<div class="t" style="left:65px;top:443px;font-size:9.2px;font-weight:bold;color:#222">Grid</div>
<div class="t" style="left:111.6px;top:443px;font-size:9.2px;font-weight:normal;color:#222">Schema/WSDL</div>
<div class="t" style="left:199px;top:443px;font-size:9.2px;font-weight:normal;color:#222">Authentic</div>
<div class="t" style="left:260.4px;top:443px;font-size:9.2px;font-weight:normal;color:#222">Browser</div>
<div class="a" style="left:4px;top:456px;width:792px;height:1.5px;background:#9E9B88"></div>
<div class="a" style="left:4px;top:476px;width:792px;height:1px;background:#FAF8F0"></div>
<div class="a" style="left:4px;top:457.5px;width:72.5px;height:18.5px;background:#F3F1E8"></div>
<div class="a" style="left:77px;top:457px;width:71px;height:18.5px;background:#ECE9D8;border-right:1px solid #8C8A7C;border-bottom:1px solid #8C8A7C;border-left:1px solid #fff"></div>
<svg class="a" style="left:9px;top:460px;overflow:visible" width="13" height="13" viewBox="0 0 13 13"><path d="M3.5 0.6H11.5V12.2H1.2V3Z" fill="#fff" stroke="#4A1010" stroke-width="1.2"/><path d="M1.2 3H3.5V0.6Z" fill="#4A1010"/><rect x="0.3" y="6" width="12.2" height="5.6" fill="#D02A30"/><text x="6.4" y="10.4" font-size="4.4" font-family="Liberation Sans" font-weight="bold" fill="#fff" text-anchor="middle">XML</text></svg>
<svg class="a" style="left:80px;top:460px;overflow:visible" width="13" height="13" viewBox="0 0 13 13"><path d="M3.5 0.6H11.5V12.2H1.2V3Z" fill="#fff" stroke="#4A1010" stroke-width="1.2"/><path d="M1.2 3H3.5V0.6Z" fill="#4A1010"/><rect x="0.3" y="6" width="12.2" height="5.6" fill="#D02A30"/><text x="6.4" y="10.4" font-size="4.4" font-family="Liberation Sans" font-weight="bold" fill="#fff" text-anchor="middle">XML</text></svg>
<div class="t" style="left:24.4px;top:461.6px;font-size:9px;color:#333;transform:scaleX(0.9);transform-origin:0 0">CONC3.XML</div>
<div class="t" style="left:95.7px;top:461.6px;font-size:9px;color:#333;transform:scaleX(0.9);transform-origin:0 0">CONCD.XML</div>
<div class="a" style="left:637px;top:478px;width:77.60000000000002px;height:12px;border:1px solid;border-color:#C8C5B2 #fff #fff #C8C5B2"></div>
<div class="t" style="left:638px;top:480.5px;font-size:8.5px;color:#222">Ln 28, Col 26</div>
<div class="a" style="left:716.8px;top:478px;width:19.200000000000045px;height:12px;border:1px solid;border-color:#C8C5B2 #fff #fff #C8C5B2"></div>
<div class="a" style="left:737.6px;top:478px;width:20.899999999999977px;height:12px;border:1px solid;border-color:#C8C5B2 #fff #fff #C8C5B2"></div>
<div class="t" style="left:738.6px;top:480.5px;font-size:8.5px;color:#222">NUM</div>
<div class="a" style="left:760.8px;top:478px;width:23.600000000000023px;height:12px;border:1px solid;border-color:#C8C5B2 #fff #fff #C8C5B2"></div>
<svg class="a" style="left:785px;top:479px;overflow:visible" width="11" height="11" viewBox="0 0 11 11"><path d="M10 2L2 10M10 5L5 10M10 8L8 10" stroke="#C4C1AE" stroke-width="1"/></svg>
</body></html>
